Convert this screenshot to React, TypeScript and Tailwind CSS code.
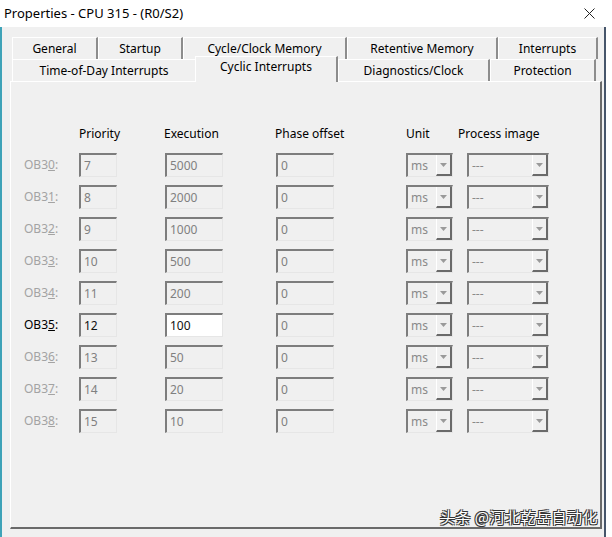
import React from "react";

const FONT = { fontFamily: '"Noto Sans", "Noto Sans CJK SC", sans-serif' };

const rows = [
  { ob: "30", prio: "7", exec: "5000" },
  { ob: "31", prio: "8", exec: "2000" },
  { ob: "32", prio: "9", exec: "1000" },
  { ob: "33", prio: "10", exec: "500" },
  { ob: "34", prio: "11", exec: "200" },
  { ob: "35", prio: "12", exec: "100", active: true },
  { ob: "36", prio: "13", exec: "50" },
  { ob: "37", prio: "14", exec: "20" },
  { ob: "38", prio: "15", exec: "10" },
];

const Field = ({
  value,
  width,
  dark,
  white,
}: {
  value: string;
  width: string;
  dark?: boolean;
  white?: boolean;
}) => (
  <div
    className={`${width} h-[24px] flex items-center pl-[3px] border-t-2 border-l-2 border-t-[#7d7d7d] border-l-[#7d7d7d] border-b border-r border-b-[#e6e6e6] border-r-[#e6e6e6] ${
      white ? "bg-white" : "bg-[#f0f0f0]"
    } ${dark ? "text-[#111]" : "text-[#808080]"}`}
  >
    {value}
  </div>
);

const Arrow = () => (
  <svg width="7" height="4" viewBox="0 0 7 4">
    <path d="M0 0 L7 0 L3.5 4 Z" fill="#9a9a9a" />
  </svg>
);

const Combo = ({ value, width }: { value: string; width: string }) => (
  <div
    className={`${width} h-[24px] flex border-t-2 border-l-2 border-t-[#7d7d7d] border-l-[#7d7d7d] border-b border-r border-b-[#e6e6e6] border-r-[#e6e6e6] bg-[#f0f0f0]`}
  >
    <div className="flex-1 flex items-center pl-[3px] text-[#8a8a8a]">{value}</div>
    <div className="w-[16px] flex items-center justify-center border-l border-l-white border-r-2 border-b-2 border-r-[#6a6a6a] border-b-[#6a6a6a]">
      <Arrow />
    </div>
  </div>
);

const Tab = ({ label, width }: { label: string; width: string }) => (
  <div
    className={`${width} h-[22px] flex items-center justify-center border-t border-l border-t-white border-l-white border-r-2 border-r-[#8c8c8c] bg-[#f0f0f0]`}
  >
    {label}
  </div>
);

export default function App() {
  return (
    <div className="w-[612px] h-[537px] bg-white flex flex-col text-[12px] text-black overflow-hidden relative" style={FONT}>
      <div className="h-[27px] flex items-center justify-between pl-[4px] pr-[17px] bg-white">
        <span className="text-[13px]">Properties - CPU 315 - (R0/S2)</span>
        <svg width="11" height="11" viewBox="0 0 11 11">
          <path d="M0.5 0.5 L10.5 10.5 M10.5 0.5 L0.5 10.5" stroke="#222" strokeWidth="1" />
        </svg>
      </div>
      <div className="w-[606px] flex-1 flex flex-col bg-[#f0f0f0] border-l-2 border-l-[#3fa3b8] border-r-2 border-r-[#46556a] pl-[8px] pt-[10px]">
        <div className="ml-[2px] flex">
          <Tab label="General" width="w-[86px]" />
          <Tab label="Startup" width="w-[85px]" />
          <Tab label="Cycle/Clock Memory" width="w-[164px]" />
          <Tab label="Retentive Memory" width="w-[151px]" />
          <Tab label="Interrupts" width="w-[100px]" />
        </div>
        <div className="ml-[2px] flex h-[22px] relative z-10">
          <Tab label="Time-of-Day Interrupts" width="w-[185px]" />
          <div className="w-[143px] -ml-[2px] h-[26px] -mt-[3px] pb-[5px] flex items-center justify-center border-t border-l border-t-white border-l-white border-r-2 border-r-[#8c8c8c] bg-[#f0f0f0]">
            Cyclic Interrupts
          </div>
          <Tab label="Diagnostics/Clock" width="w-[152px]" />
          <Tab label="Protection" width="w-[106px]" />
        </div>
        <div className="w-[592px] h-[448px] border-t border-l border-t-white border-l-white border-r-2 border-b-2 border-r-[#6a6a6a] border-b-[#6a6a6a] pl-[13px] pt-[44px]">
          <div className="flex h-[16px] items-center">
            <div className="w-[55px]" />
            <div className="w-[85px]">Priority</div>
            <div className="w-[111px]">Execution</div>
            <div className="w-[131px]">Phase offset</div>
            <div className="w-[52px]">Unit</div>
            <div>Process image</div>
          </div>
          <div className="flex flex-col gap-[8px] mt-[11px]">
            {rows.map((r) => (
              <div key={r.ob} className="flex items-center h-[24px]">
                <div className={`w-[55px] ${r.active ? "text-black" : "text-[#a3a3a3]"}`}>
                  OB3<span className="underline">{r.ob[1]}</span>:
                </div>
                <Field value={r.prio} width="w-[38px]" dark={r.active} />
                <div className="w-[48px]" />
                <Field value={r.exec} width="w-[58px]" dark={r.active} white={r.active} />
                <div className="w-[53px]" />
                <Field value="0" width="w-[58px]" />
                <div className="w-[72px]" />
                <Combo value="ms" width="w-[47px]" />
                <div className="w-[14px]" />
                <Combo value="---" width="w-[82px]" />
              </div>
            ))}
          </div>
        </div>
      </div>
      <div
        className="absolute left-[440px] top-[506px] text-[15px] text-white tracking-[0.5px]"
        style={{
          fontFamily: '"Noto Sans CJK SC", sans-serif',
          textShadow: "1px 1px 0 #333, -1px -1px 0 #333, 1px -1px 0 #333, -1px 1px 0 #333",
        }}
      >
        头条 @河北乾岳自动化
      </div>
    </div>
  );
}
